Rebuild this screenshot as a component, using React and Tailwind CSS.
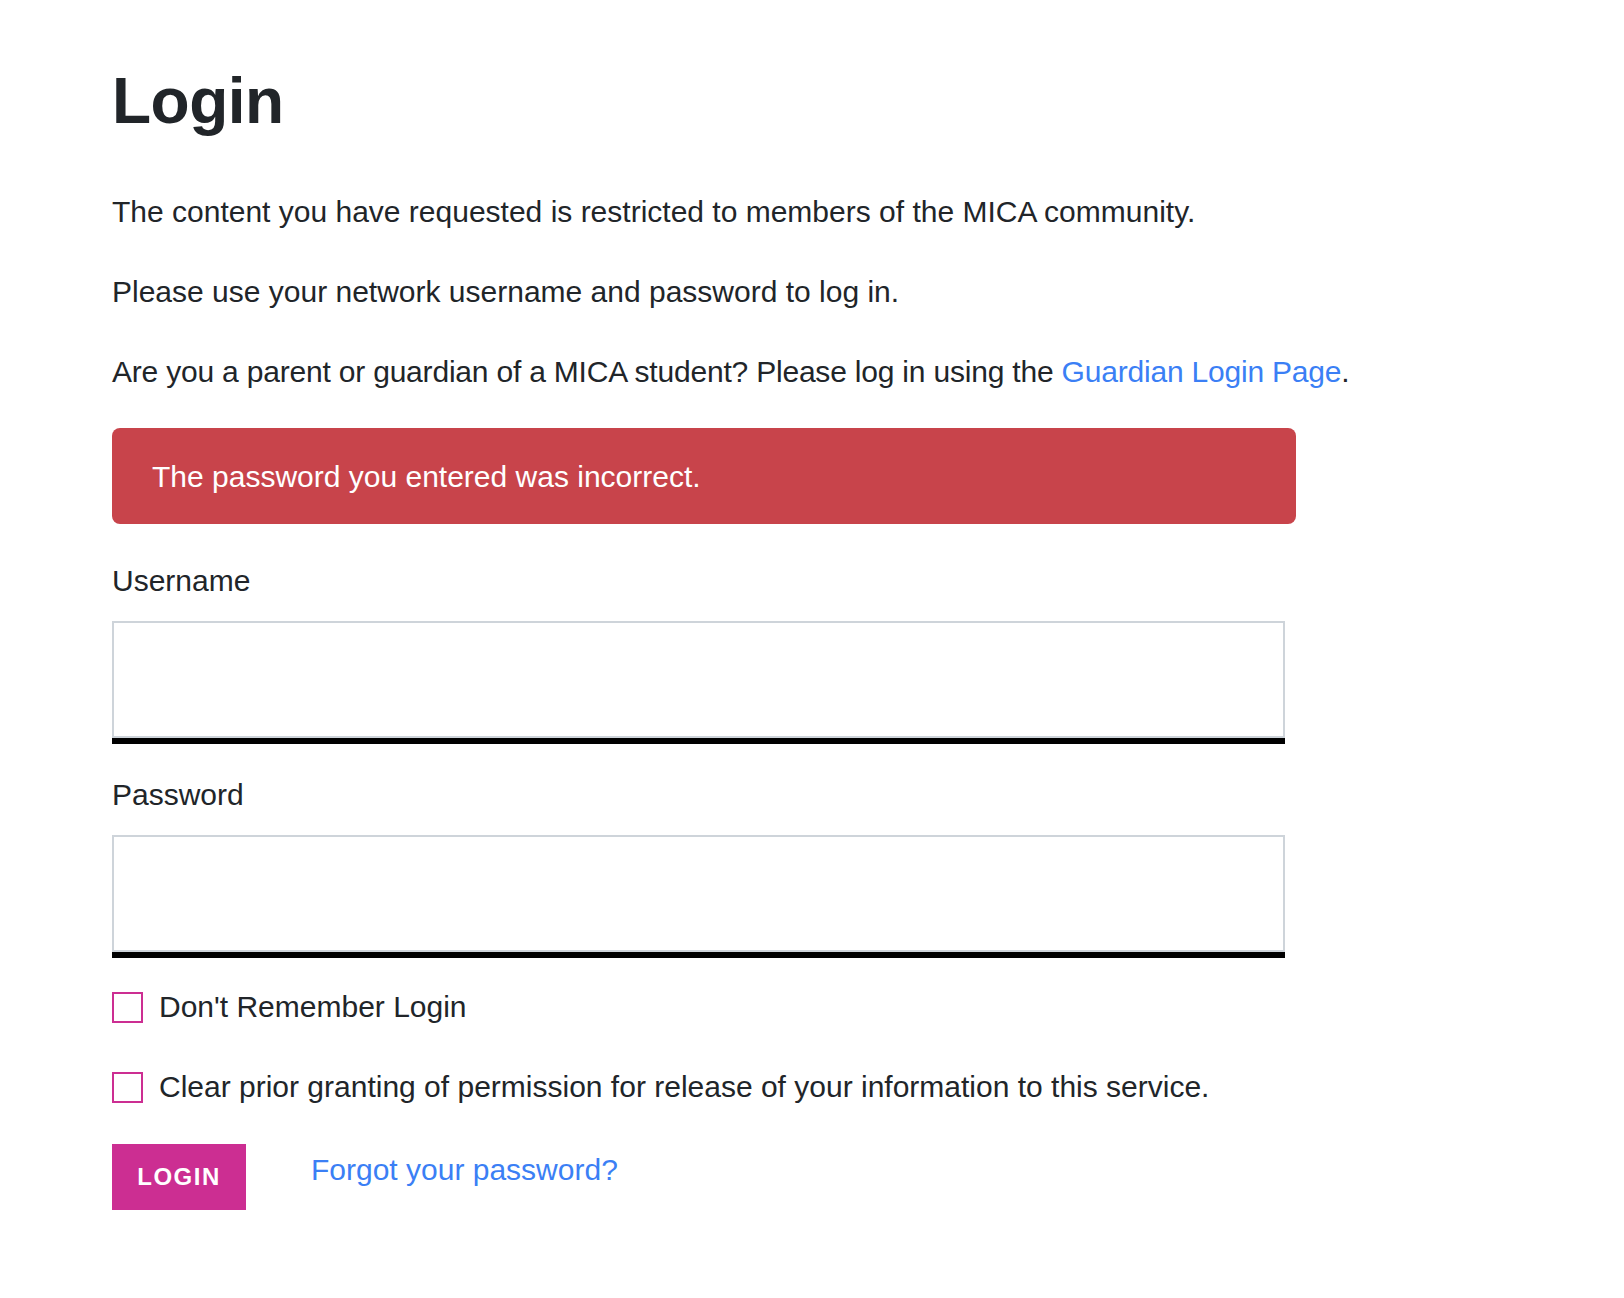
import { useState } from 'react'

// Login form with error banner
function Field({ label, type, className = '' }) {
  return (
    <div className={className}>
      <label className="block text-[30px] leading-[42px] text-[#212529]">{label}</label>
      <div className="mt-[19px] w-[1173px] border-b-[6px] border-black">
        <input
          type={type}
          className="block w-full h-[117px] border-2 border-[#ced4da] bg-white px-4 text-[28px] outline-none"
        />
      </div>
    </div>
  )
}

function CheckRow({ label, className = '' }) {
  const [checked, setChecked] = useState(false)
  return (
    <label className={`flex items-center gap-[16px] h-[42px] cursor-pointer ${className}`}>
      <span
        onClick={() => setChecked(!checked)}
        className="w-[31px] h-[31px] border-2 border-[#cc2e92] bg-white shrink-0"
      >
        {checked && <span className="block w-full h-full bg-[#cc2e92]" />}
      </span>
      <span className="text-[30px] leading-[42px] text-[#212529]">{label}</span>
    </label>
  )
}

export default function App() {
  return (
    <div
      className="min-h-[1298px] bg-white pl-[112px] pt-[64px]"
      style={{ fontFamily: '"Liberation Sans", Arial, sans-serif' }}
    >
      <h1 className="text-[64px] leading-[74px] font-bold text-[#212529] tracking-[-0.5px]">Login</h1>

      <div className="mt-[53px] text-[30px] leading-[42px] text-[#212529]">
        <p className="mb-[38px]">The content you have requested is restricted to members of the MICA community.</p>
        <p className="mb-[38px]">Please use your network username and password to log in.</p>
        <p className="tracking-[-0.2px]">
          Are you a parent or guardian of a MICA student? Please log in using the{' '}
          <a href="#" className="text-[#3b7ff5]">Guardian Login Page</a>.
        </p>
      </div>

      <div className="mt-[35px] w-[1184px] rounded-lg bg-[#c8444b] pl-[40px] pt-[28px] pb-[26px] text-[30px] leading-[42px] text-white">
        The password you entered was incorrect.
      </div>

      <Field label="Username" type="text" className="mt-[36px]" />
      <Field label="Password" type="password" className="mt-[30px]" />

      <CheckRow label="Don't Remember Login" className="mt-[28px]" />
      <CheckRow label="Clear prior granting of permission for release of your information to this service." className="mt-[38px]" />

      <div className="mt-[36px] flex items-start gap-[65px]">
        <button className="h-[66px] w-[134px] bg-[#cc2e92] text-[24px] font-bold tracking-[1.5px] text-white">
          LOGIN
        </button>
        <a href="#" className="mt-[5px] text-[30px] leading-[42px] text-[#3b7ff5]">Forgot your password?</a>
      </div>
    </div>
  )
}
